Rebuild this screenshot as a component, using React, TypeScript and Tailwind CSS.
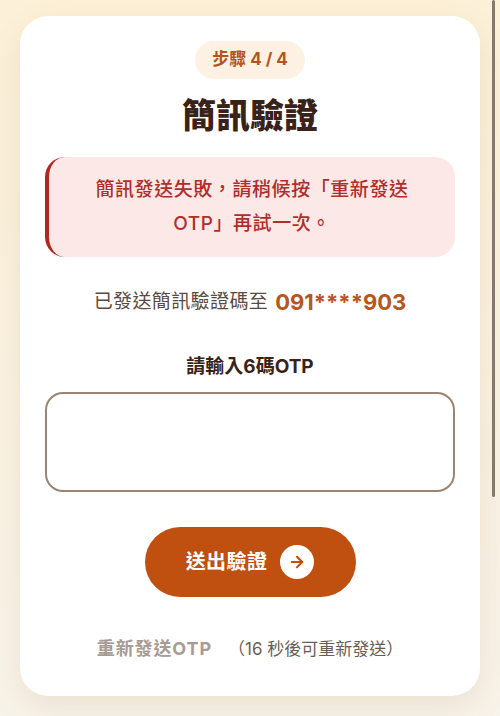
import { ArrowRight } from "lucide-react";

const App = () => {
  return (
    <div
      className="relative h-[716px] overflow-hidden bg-gradient-to-b from-[#fcf0d8] to-[#f8f3ea] pt-4"
      style={{ fontFamily: 'Inter, "Noto Sans CJK TC", sans-serif' }}
    >
      <section className="mx-5 flex flex-col items-center rounded-[28px] bg-white px-[25px] pt-[25px] pb-[34px] shadow-[0_12px_32px_rgba(150,110,40,0.12)]">
        <div className="flex h-[38px] w-[110px] items-center justify-center rounded-full bg-[#fdf1e4] text-[17px] font-bold text-[#b4541c]">
          步驟 4 / 4
        </div>
        <h1 className="mt-[17px] text-[34px] font-black leading-[40px] text-[#3a2218]">
          簡訊驗證
        </h1>
        <div className="mt-[21px] w-full rounded-[20px] border-l-4 border-[#b3261e] bg-[#fde8e8] px-9 py-4 text-center text-[19px] font-medium leading-[34px] tracking-[0.03em] text-[#b02e2a]">
          簡訊發送失敗，請稍候按「重新發送OTP」再試一次。
        </div>
        <p className="mt-[30px] flex items-center text-[19px] leading-[30px] tracking-[0.02em] text-[#5a4a42]">
          已發送簡訊驗證碼至
          <span className="ml-[7px] text-[22px] font-bold tracking-normal text-[#b8561c]">
            091****903
          </span>
        </p>
        <label className="mt-[37px] text-[19px] font-bold leading-[26px] text-[#3a2218]">
          請輸入6碼OTP
        </label>
        <input
          type="text"
          className="mt-3 h-[100px] w-full rounded-[18px] border-2 border-[#9a8572] bg-white px-4 outline-none"
        />
        <button className="mt-[35px] flex h-[70px] w-[211px] items-center justify-center gap-[13px] rounded-full bg-[#c0500f] text-[20px] font-bold text-white">
          <span className="tracking-[0.02em]">送出驗證</span>
          <span className="flex h-[34px] w-[34px] items-center justify-center rounded-full bg-white text-[#c0500f]">
            <ArrowRight size={18} strokeWidth={2.75} />
          </span>
        </button>
        <div className="mt-[39px] flex items-center leading-[26px]">
          <span className="text-[18px] font-bold tracking-[0.05em] text-[#a89b93]">
            重新發送OTP
          </span>
          <span className="ml-4 text-[17px] text-[#6b5d55]">（16 秒後可重新發送）</span>
        </div>
      </section>
      <div className="absolute right-[5px] top-0 h-[497px] w-[3px] rounded-full bg-[#85796d]" />
    </div>
  );
};

export default App;
